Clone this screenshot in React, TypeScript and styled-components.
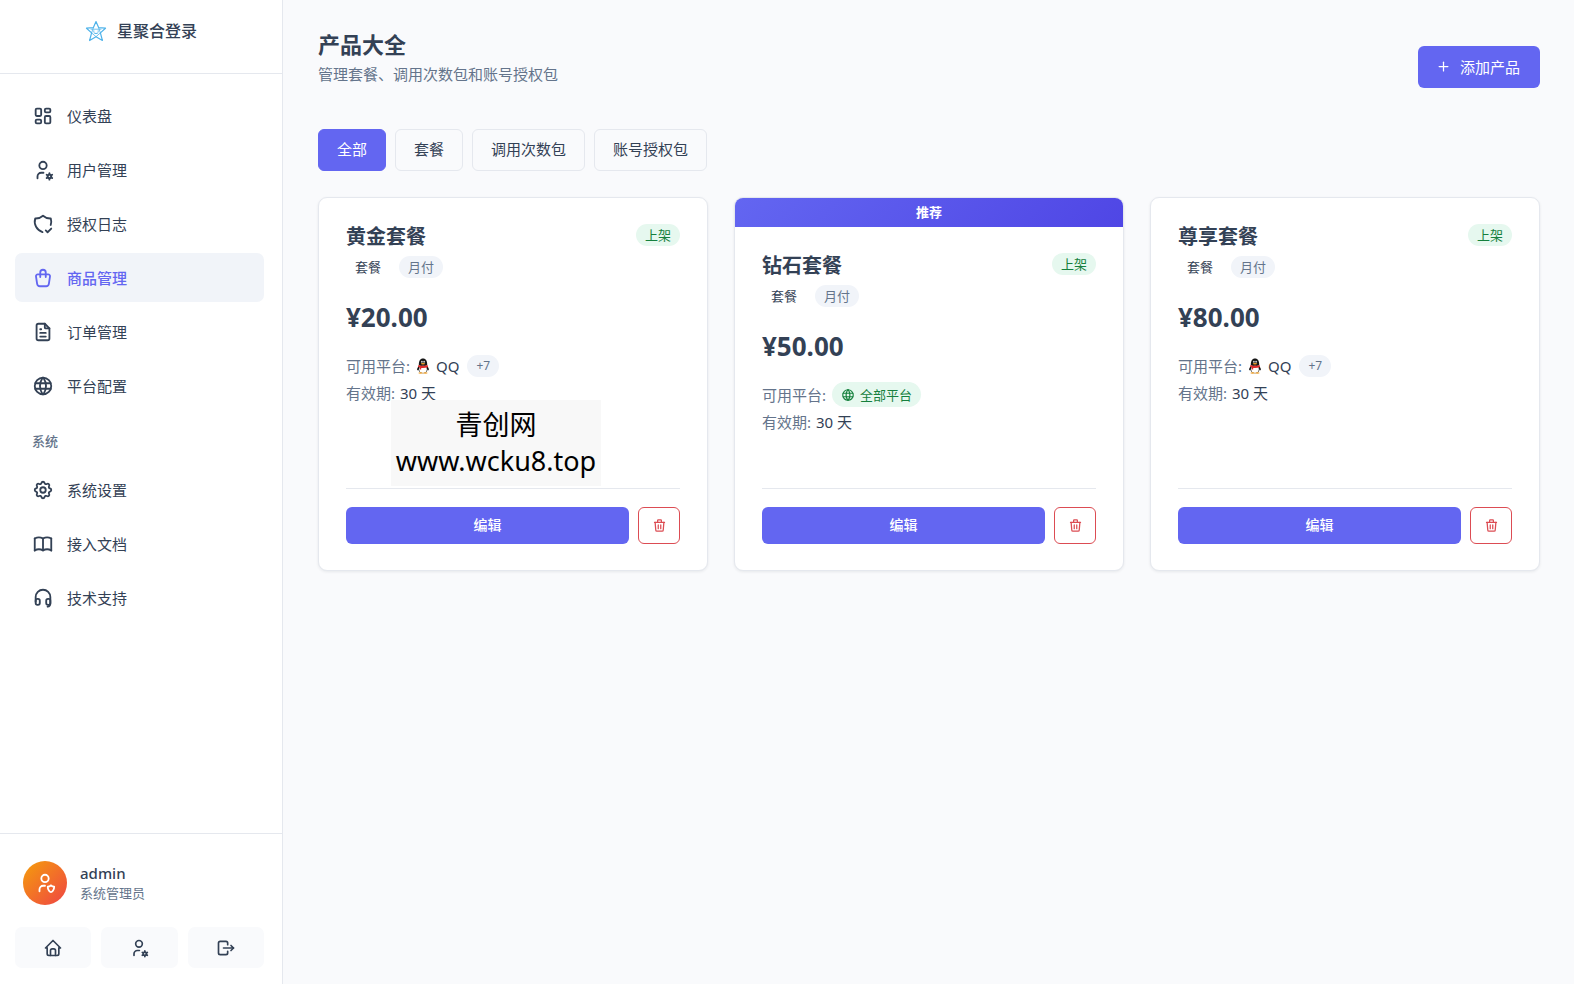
import React from "react";
import styled, { createGlobalStyle, css } from "styled-components";
import {
  TbBook,
  TbFileText,
  TbHome,
  TbLogout,
  TbPlus,
  TbSettings,
  TbShieldCheck,
  TbShoppingBag,
  TbTrash,
  TbUserCog,
  TbUserShield,
  TbWorld,
} from "react-icons/tb";

const color = {
  primary: "#6366f1",
  primaryDark: "#4f46e5",
  page: "#f9fafc",
  surface: "#ffffff",
  muted: "#f1f4f9",
  border: "#e5e8ee",
  text: "#334155",
  textSoft: "#64748b",
  danger: "#dc4c53",
  green: "#15803d",
  greenSoft: "#e6f8ef",
};

const GlobalStyle = createGlobalStyle`
  *, *::before, *::after { box-sizing: border-box; }
  body {
    margin: 0;
    background: ${color.page};
    color: ${color.text};
    font-family: "Noto Sans", "Noto Sans CJK SC", sans-serif;
    font-size: 15px;
    line-height: 22px;
  }
  button { font: inherit; cursor: pointer; }
  h1, h2, p, ul { margin: 0; padding: 0; }
  ul { list-style: none; }
  svg { flex: none; display: block; }
`;

const Shell = styled.div`
  display: flex;
  min-height: 100vh;
`;

const Sidebar = styled.aside`
  position: sticky;
  top: 0;
  display: flex;
  flex-direction: column;
  flex: none;
  width: 283px;
  height: 100vh;
  background: ${color.surface};
  border-right: 1px solid ${color.border};
`;

const Brand = styled.a`
  display: flex;
  justify-content: center;
  align-items: center;
  gap: 10px;
  padding: 19px 0 30px;
  border-bottom: 1px solid ${color.border};
  color: ${color.text};
  font-size: 16px;
  font-weight: 500;
  line-height: 24px;
  text-decoration: none;
`;

const Nav = styled.nav`
  flex: 1;
  padding: 17px 18px 16px 15px;
  overflow-y: auto;
`;

const NavList = styled.ul`
  display: flex;
  flex-direction: column;
  gap: 5px;
`;

const NavHeading = styled.h2`
  margin: 22px 0 15px;
  padding-left: 17px;
  color: ${color.textSoft};
  font-size: 13px;
  font-weight: 500;
  line-height: 18px;
`;

const NavLink = styled.a<{ $active?: boolean }>`
  display: flex;
  align-items: center;
  gap: 13px;
  height: 49px;
  padding: 0 17px;
  border-radius: 7px;
  color: ${(p) => (p.$active ? color.primary : color.text)};
  background: ${(p) => (p.$active ? color.muted : "transparent")};
  font-weight: ${(p) => (p.$active ? 500 : 400)};
  text-decoration: none;
`;

const Account = styled.div`
  display: flex;
  flex-direction: column;
  gap: 22px;
  padding: 27px 18px 16px 15px;
  border-top: 1px solid ${color.border};
`;

const Profile = styled.div`
  display: flex;
  align-items: center;
  gap: 13px;
  padding-left: 8px;
`;

const Avatar = styled.div`
  display: grid;
  place-items: center;
  width: 44px;
  height: 44px;
  border-radius: 50%;
  color: #fff;
  background: linear-gradient(135deg, #f59e0b, #ef4444);
`;

const ProfileName = styled.p`
  font-weight: 500;
  line-height: 20px;
`;

const ProfileRole = styled.p`
  color: ${color.textSoft};
  font-size: 13px;
  line-height: 20px;
`;

const Shortcuts = styled.div`
  display: grid;
  grid-template-columns: repeat(3, 1fr);
  gap: 10px;
`;

const Shortcut = styled.button`
  display: grid;
  place-items: center;
  height: 41px;
  padding: 0;
  border: 0;
  border-radius: 7px;
  color: ${color.text};
  background: ${color.page};
`;

const Main = styled.main`
  flex: 1;
  min-width: 0;
  padding: 30px 34px 32px 35px;
`;

const PageHeader = styled.header`
  display: flex;
  justify-content: space-between;
  align-items: center;
  margin-bottom: 26px;
`;

const PageTitle = styled.h1`
  margin-bottom: 5px;
  font-size: 22px;
  font-weight: 700;
  line-height: 28px;
`;

const PageSubtitle = styled.p`
  margin-bottom: 18px;
  color: ${color.textSoft};
`;

const AddButton = styled.button`
  display: flex;
  align-items: center;
  gap: 9px;
  height: 42px;
  padding: 0 20px 0 18px;
  border: 0;
  border-radius: 6px;
  color: #fff;
  background: ${color.primary};
`;

const Filters = styled.div`
  display: flex;
  flex-wrap: wrap;
  gap: 9px;
  margin-bottom: 26px;
`;

const FilterButton = styled.button<{ $active?: boolean }>`
  height: 42px;
  padding: 0 18px 2px;
  border: 1px solid ${(p) => (p.$active ? color.primary : color.border)};
  border-radius: 6px;
  color: ${(p) => (p.$active ? "#fff" : color.text)};
  background: ${(p) => (p.$active ? color.primary : color.page)};
`;

const Grid = styled.div`
  display: grid;
  grid-template-columns: repeat(3, minmax(0, 1fr));
  gap: 26px;
`;

const Card = styled.article`
  position: relative;
  display: flex;
  flex-direction: column;
  border: 1px solid ${color.border};
  border-radius: 9px;
  background: ${color.surface};
  box-shadow: 0 1px 3px rgba(15, 23, 42, 0.08);
`;

const Ribbon = styled.div`
  border-radius: 8px 8px 0 0;
  color: #fff;
  background: linear-gradient(135deg, ${color.primary}, ${color.primaryDark});
  font-size: 13px;
  font-weight: 700;
  line-height: 29px;
  text-align: center;
`;

const CardBody = styled.div`
  display: flex;
  flex-direction: column;
  flex: 1;
  padding: 26px 27px;
`;

const CardHead = styled.div`
  display: flex;
  justify-content: space-between;
  align-items: flex-start;
`;

const CardTitle = styled.h2`
  margin-bottom: 6px;
  font-size: 20px;
  font-weight: 700;
  line-height: 26px;
`;

const Tags = styled.div`
  display: flex;
  gap: 9px;
`;

type Tone = "plain" | "gray" | "green";

const tones = {
  plain: css`
    color: ${color.text};
  `,
  gray: css`
    color: ${color.textSoft};
    background: ${color.muted};
  `,
  green: css`
    color: ${color.green};
    background: ${color.greenSoft};
  `,
};

const Tag = styled.span<{ $tone: Tone; $size?: "small" | "large" }>`
  display: inline-flex;
  align-items: center;
  gap: 5px;
  height: ${(p) => (p.$size === "large" ? 25 : 22)}px;
  padding: 0 9px;
  border-radius: 13px;
  font-size: ${(p) => (p.$size === "small" ? 12 : 13)}px;
  ${(p) => tones[p.$tone]}
`;

const Price = styled.p`
  margin: 23px 0 20px;
  font-size: 26px;
  font-weight: 700;
  line-height: 32px;
`;

const Details = styled.ul`
  display: flex;
  flex-direction: column;
  flex: 1;
  gap: 4px;
  min-height: 106px;
`;

const Detail = styled.li`
  display: flex;
  align-items: center;
  gap: 5px;
`;

const PlatformDetail = styled(Detail)`
  gap: 6px;
  height: 25px;
`;

const DetailLabel = styled.span`
  color: ${color.textSoft};
`;

const Platform = styled.span`
  display: inline-flex;
  align-items: center;
  gap: 6px;
  margin-right: 2px;
`;

const CardActions = styled.div`
  display: flex;
  gap: 9px;
  padding-top: 18px;
  border-top: 1px solid ${color.border};
`;

const EditButton = styled.button`
  flex: 1;
  height: 37px;
  padding: 0 0 2px;
  border: 0;
  border-radius: 6px;
  color: #fff;
  background: ${color.primary};
  font-size: 14px;
  font-weight: 500;
`;

const DeleteButton = styled.button`
  display: grid;
  place-items: center;
  width: 42px;
  height: 37px;
  padding: 0;
  border: 1px solid ${color.danger};
  border-radius: 6px;
  color: ${color.danger};
  background: ${color.surface};
`;

const Stamp = styled.div`
  position: absolute;
  top: 202px;
  left: 72px;
  width: 210px;
  height: 86px;
  padding-top: 7px;
  color: #000;
  background: #f8f8f8;
  font-size: 27px;
  line-height: 36px;
  text-align: center;
  white-space: nowrap;
`;

interface IconProps {
  size?: number;
}

function StarLogo() {
  return (
    <svg width="22" height="22" viewBox="0 0 22 22" fill="none" stroke="#4fb3ea" strokeLinejoin="round" strokeLinecap="round" aria-hidden="true">
      <path d="M11 1.500 13.600 7.600 20.500 8.200 15.400 12.900 17.400 20.500 11 16.700 4.600 20.500 6.600 12.900 1.500 8.200 8.400 7.600Z" strokeWidth="1.200" />
      <path d="M6 9.200 16 9.200M6.600 12.900 8.400 7.600M15.400 12.900 13.600 7.600M6.600 12.900 11 16.700 15.400 12.900" strokeWidth=".8" />
      <path d="M8.800 10.800v.6M13.200 10.800v.6M9 13q2 1.400 4 0" strokeWidth="1" />
    </svg>
  );
}

function DashboardIcon({ size = 22 }: IconProps) {
  return (
    <svg width={size} height={size} viewBox="0 0 24 24" fill="none" stroke="currentColor" strokeWidth="2" aria-hidden="true">
      <rect x="4" y="4" width="6" height="8" rx="1.300" />
      <rect x="4" y="16" width="6" height="4" rx="1.300" />
      <rect x="14" y="4" width="6" height="4" rx="1.300" />
      <rect x="14" y="12" width="6" height="8" rx="1.300" />
    </svg>
  );
}

function HeadphonesIcon({ size = 22 }: IconProps) {
  return (
    <svg width={size} height={size} viewBox="0 0 24 24" fill="none" stroke="currentColor" strokeWidth="2" strokeLinecap="round" aria-hidden="true">
      <path d="M4 16v-5a8 8 0 0 1 16 0v7c0 2-1.200 3.200-3 3.500" />
      <rect x="4" y="13" width="4.500" height="6.500" rx="2" />
      <rect x="15.500" y="13" width="4.500" height="6.500" rx="2" />
    </svg>
  );
}

function QQIcon() {
  return (
    <svg width="14" height="16" viewBox="0 0 14 16" aria-hidden="true">
      <path d="M3 8C1.600 9.400.7 11.200 1.300 12.200c.4.4 1-.2 1.500-.9h8.400c.5.7 1.100 1.300 1.500.9.6-1-.3-2.800-1.700-4.200Z" fill="#161616" />
      <ellipse cx="7" cy="11" rx="4.700" ry="4.200" fill="#161616" />
      <ellipse cx="7" cy="11.200" rx="3.800" ry="3.700" fill="#fff" />
      <ellipse cx="4.600" cy="15" rx="2.200" ry=".8" fill="#f2a32c" />
      <ellipse cx="9.400" cy="15" rx="2.200" ry=".8" fill="#f2a32c" />
      <path d="M2.800 7.400C2.600 3 4.200.6 7 .6s4.400 2.400 4.200 6.800Z" fill="#161616" />
      <ellipse cx="5.900" cy="3.800" rx=".7" ry="1" fill="#fff" />
      <ellipse cx="8.100" cy="3.800" rx=".7" ry="1" fill="#fff" />
      <ellipse cx="7" cy="5.700" rx="2.200" ry=".7" fill="#f2a32c" />
      <path d="M2.500 6.900q4.500 1.800 9 0l.5 2q-2.500 1-5 1.100-1 0-1.800-.1v1.700H3.900V9.600l-1.900-.9Z" fill="#e02a2a" />
    </svg>
  );
}

interface NavEntry {
  label: string;
  icon: React.ComponentType<IconProps>;
  active?: boolean;
}

const mainNav: NavEntry[] = [
  { label: "仪表盘", icon: DashboardIcon },
  { label: "用户管理", icon: TbUserCog },
  { label: "授权日志", icon: TbShieldCheck },
  { label: "商品管理", icon: TbShoppingBag, active: true },
  { label: "订单管理", icon: TbFileText },
  { label: "平台配置", icon: TbWorld },
];

const systemNav: NavEntry[] = [
  { label: "系统设置", icon: TbSettings },
  { label: "接入文档", icon: TbBook },
  { label: "技术支持", icon: HeadphonesIcon },
];

const shortcuts: NavEntry[] = [
  { label: "首页", icon: TbHome },
  { label: "账号设置", icon: TbUserCog },
  { label: "退出登录", icon: TbLogout },
];

const filters = ["全部", "套餐", "调用次数包", "账号授权包"];

interface Product {
  name: string;
  price: string;
  featured?: boolean;
  stamped?: boolean;
}

const products: Product[] = [
  { name: "黄金套餐", price: "¥20.00", stamped: true },
  { name: "钻石套餐", price: "¥50.00", featured: true },
  { name: "尊享套餐", price: "¥80.00" },
];

function NavItems({ entries }: { entries: NavEntry[] }) {
  return (
    <NavList>
      {entries.map(({ label, icon: Icon, active }) => (
        <li key={label}>
          <NavLink href="#" $active={active} aria-current={active ? "page" : undefined}>
            <Icon size={22} />
            {label}
          </NavLink>
        </li>
      ))}
    </NavList>
  );
}

function ProductCard({ name, price, featured, stamped }: Product) {
  return (
    <Card>
      {featured && <Ribbon>推荐</Ribbon>}
      <CardBody>
        <CardHead>
          <div>
            <CardTitle>{name}</CardTitle>
            <Tags>
              <Tag $tone="plain">套餐</Tag>
              <Tag $tone="gray">月付</Tag>
            </Tags>
          </div>
          <Tag $tone="green">上架</Tag>
        </CardHead>
        <Price>{price}</Price>
        <Details>
          <PlatformDetail>
            <DetailLabel>可用平台:</DetailLabel>
            {featured ? (
              <Tag $tone="green" $size="large">
                <TbWorld size={14} />
                全部平台
              </Tag>
            ) : (
              <>
                <Platform>
                  <QQIcon />
                  QQ
                </Platform>
                <Tag $tone="gray" $size="small">+7</Tag>
              </>
            )}
          </PlatformDetail>
          <Detail>
            <DetailLabel>有效期:</DetailLabel>
            30 天
          </Detail>
        </Details>
        <CardActions>
          <EditButton type="button">编辑</EditButton>
          <DeleteButton type="button" aria-label="删除">
            <TbTrash size={15} />
          </DeleteButton>
        </CardActions>
      </CardBody>
      {stamped && (
        <Stamp>
          <p>青创网</p>
          <p>www.wcku8.top</p>
        </Stamp>
      )}
    </Card>
  );
}

export default function App() {
  return (
    <>
      <GlobalStyle />
      <Shell>
        <Sidebar>
          <Brand href="#">
            <StarLogo />
            星聚合登录
          </Brand>
          <Nav>
            <NavItems entries={mainNav} />
            <NavHeading>系统</NavHeading>
            <NavItems entries={systemNav} />
          </Nav>
          <Account>
            <Profile>
              <Avatar>
                <TbUserShield size={22} />
              </Avatar>
              <div>
                <ProfileName>admin</ProfileName>
                <ProfileRole>系统管理员</ProfileRole>
              </div>
            </Profile>
            <Shortcuts>
              {shortcuts.map(({ label, icon: Icon }) => (
                <Shortcut key={label} type="button" aria-label={label}>
                  <Icon size={20} />
                </Shortcut>
              ))}
            </Shortcuts>
          </Account>
        </Sidebar>
        <Main>
          <PageHeader>
            <div>
              <PageTitle>产品大全</PageTitle>
              <PageSubtitle>管理套餐、调用次数包和账号授权包</PageSubtitle>
            </div>
            <AddButton type="button">
              <TbPlus size={15} />
              添加产品
            </AddButton>
          </PageHeader>
          <Filters>
            {filters.map((label, i) => (
              <FilterButton key={label} type="button" $active={i === 0} aria-pressed={i === 0}>
                {label}
              </FilterButton>
            ))}
          </Filters>
          <Grid>
            {products.map((product) => (
              <ProductCard key={product.name} {...product} />
            ))}
          </Grid>
        </Main>
      </Shell>
    </>
  );
}
